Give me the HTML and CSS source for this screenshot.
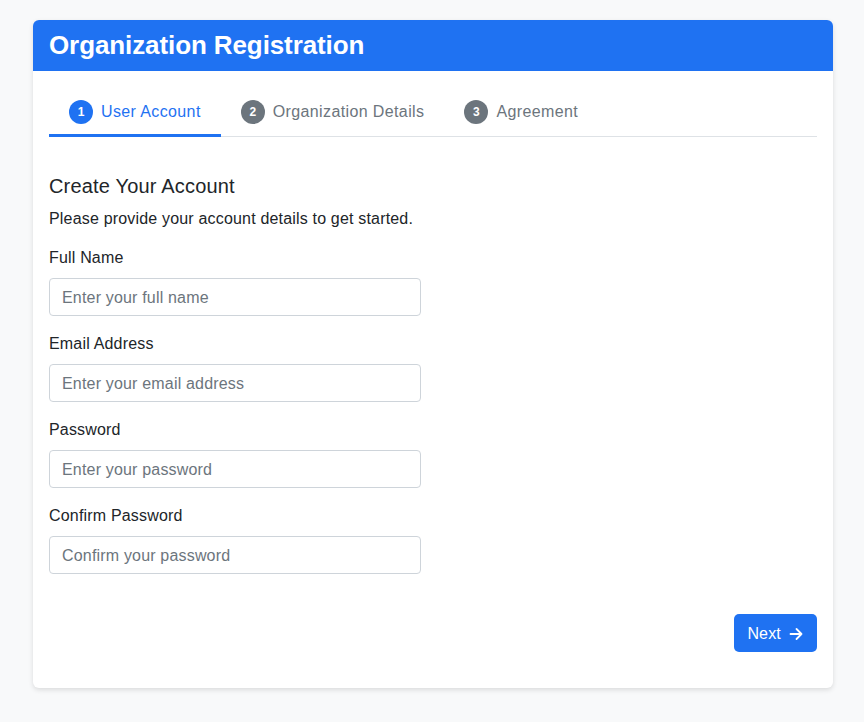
FILE: index.html
```html
<!DOCTYPE html>
<html>
<head>
<meta charset="utf-8">
<link rel="stylesheet" href="styles.css">
</head>
<body>
<div class="card">
  <div class="card-header">
    <h1>Organization Registration</h1>
  </div>
  <div class="card-body">
    <ul class="steps">
      <li class="step active"><span class="num">1</span>User Account</li>
      <li class="step"><span class="num">2</span>Organization Details</li>
      <li class="step"><span class="num">3</span>Agreement</li>
    </ul>
    <div class="pane">
      <h2>Create Your Account</h2>
      <p class="lead">Please provide your account details to get started.</p>
      <div class="group">
        <label>Full Name</label>
        <input class="field" type="text" placeholder="Enter your full name">
      </div>
      <div class="group">
        <label>Email Address</label>
        <input class="field" type="email" placeholder="Enter your email address">
      </div>
      <div class="group">
        <label>Password</label>
        <input class="field" type="password" placeholder="Enter your password">
      </div>
      <div class="group">
        <label>Confirm Password</label>
        <input class="field" type="password" placeholder="Confirm your password">
      </div>
      <div class="actions">
        <button class="btn">Next
          <svg width="16" height="16" viewBox="0 0 16 16" fill="none" stroke="#fff" stroke-width="1.8" stroke-linecap="round" stroke-linejoin="round"><path d="M2.5 8h11M8.5 3l5 5-5 5"/></svg>
        </button>
      </div>
    </div>
  </div>
</div>
</body>
</html>
```
FILE: styles.css
```css
* { box-sizing: border-box; }
html, body { margin: 0; padding: 0; }
body {
  background: #f8f9fa;
  font-family: "Liberation Sans", Arial, sans-serif;
  color: #212529;
  font-size: 16px;
  line-height: 1.5;
  letter-spacing: 0.18px;
  padding: 20px 31px 34px 33px;
}
.card {
  width: 800px;
  background: #fff;
  border-radius: 6px;
  box-shadow: 0 2px 5px rgba(0,0,0,0.12);
  overflow: hidden;
}
.card-header {
  background: #1f72f2;
  color: #fff;
  height: 51px;
  padding: 0 16px;
  display: flex;
  align-items: center;
}
.card-header h1 {
  margin: 0;
  font-size: 26px;
  font-weight: 700;
  line-height: 1.2;
  letter-spacing: -0.1px;
}
.card-body { padding: 16px 16px 36px; }
.steps {
  list-style: none;
  margin: 0;
  padding: 0;
  display: flex;
  border-bottom: 1px solid #dee2e6;
}
.step {
  display: flex;
  align-items: center;
  height: 50px;
  padding: 3px 20px 0;
  color: #6c757d;
  letter-spacing: 0.38px;
  border-bottom: 3px solid transparent;
  margin-bottom: -1px;
}
.step.active { color: #1f72f2; border-bottom-color: #1f72f2; }
.num {
  width: 24px;
  height: 24px;
  border-radius: 50%;
  background: #6c757d;
  color: #fff;
  font-size: 12px;
  font-weight: 700;
  letter-spacing: 0;
  display: flex;
  align-items: center;
  justify-content: center;
  margin-right: 8px;
}
.step.active .num { background: #1f72f2; }
.pane { padding-top: 37px; }
h2 {
  margin: 0 0 9px;
  font-size: 20px;
  font-weight: 500;
  line-height: 24px;
}
.lead { margin: 0 0 15px; line-height: 24px; }
.group { margin-bottom: 16px; }
label { display: block; margin-bottom: 8px; line-height: 24px; }
.field {
  display: block;
  width: 372px;
  height: 38px;
  padding: 7px 12px 5px;
  font: inherit;
  letter-spacing: 0.18px;
  color: #212529;
  border: 1px solid #ced4da;
  border-radius: 4px;
  background: #fff;
}
.field::placeholder { color: #6c757d; }
.actions { display: flex; justify-content: flex-end; margin-top: 40px; }
.btn {
  display: flex;
  align-items: center;
  gap: 7px;
  height: 38px;
  padding: 1px 13px 0;
  background: #1f72f2;
  color: #fff;
  border: none;
  border-radius: 5px;
  font: inherit;
  letter-spacing: 0.18px;
}
```
